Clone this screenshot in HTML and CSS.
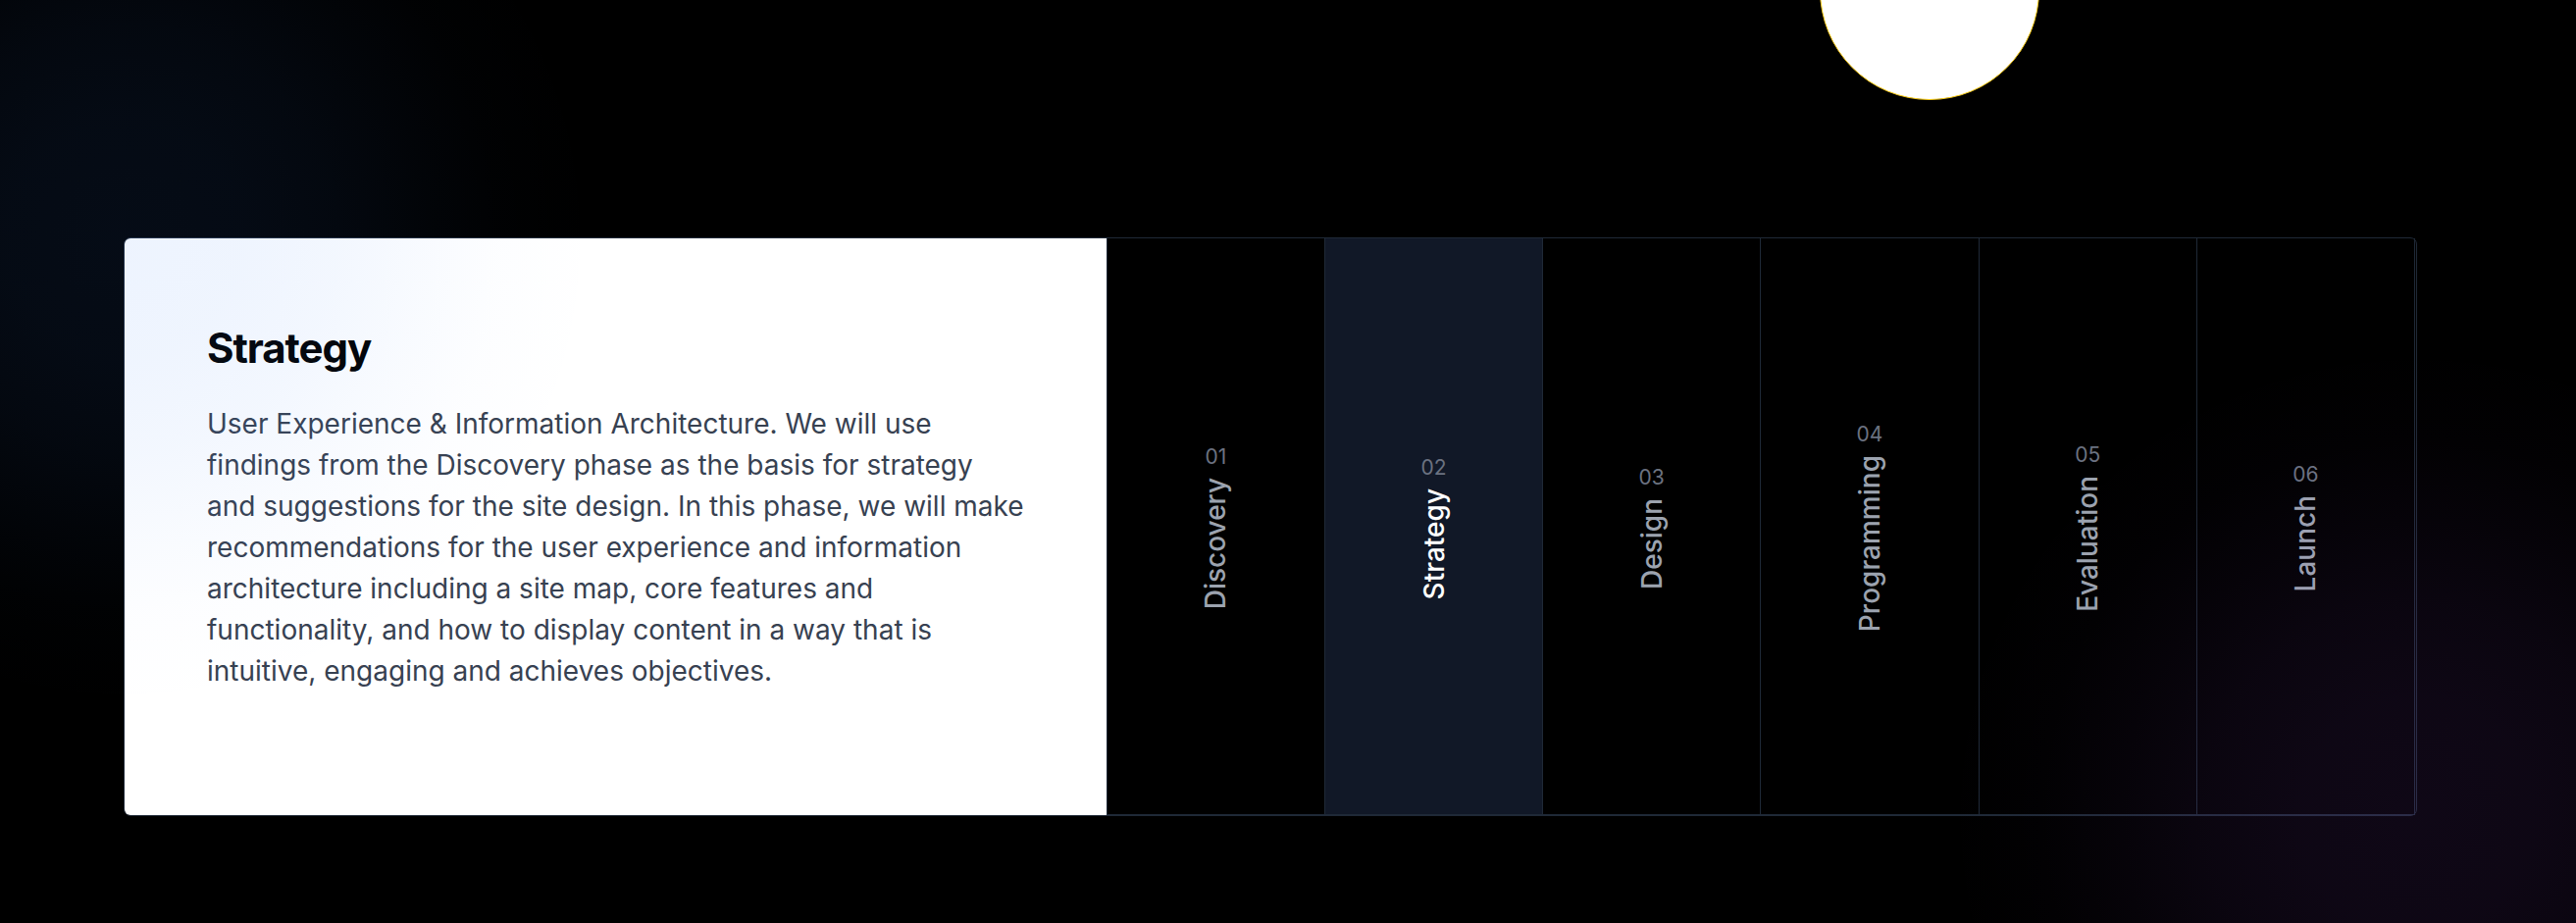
FILE: index.html
```
<!DOCTYPE html>
<html lang="en">
<head>
<meta charset="utf-8">
<meta name="viewport" content="width=device-width, initial-scale=1">
<title>Our process</title>
<link rel="stylesheet" href="styles.css">
</head>
<body>
<main class="process">
  <div class="moon" aria-hidden="true"></div>
  <section class="card">
    <article class="panel" id="panel-strategy" role="tabpanel" aria-labelledby="tab-strategy">
      <h2 class="panel-title">Strategy</h2>
      <p class="panel-text">User Experience &amp; Information Architecture. We will use findings from the Discovery phase as the basis for strategy and suggestions for the site design. In this phase, we will make recommendations for the user experience and information architecture including a site map, core features and functionality, and how to display content in a way that is intuitive, engaging and achieves objectives.</p>
    </article>
    <div class="tabs" role="tablist" aria-label="Process phases">
      <button class="tab" type="button" role="tab" aria-selected="false"><span class="tab-number">01</span><span class="tab-label">Discovery</span></button>
      <button class="tab" type="button" role="tab" aria-selected="true" id="tab-strategy" aria-controls="panel-strategy"><span class="tab-number">02</span><span class="tab-label">Strategy</span></button>
      <button class="tab" type="button" role="tab" aria-selected="false"><span class="tab-number">03</span><span class="tab-label">Design</span></button>
      <button class="tab" type="button" role="tab" aria-selected="false"><span class="tab-number">04</span><span class="tab-label">Programming</span></button>
      <button class="tab" type="button" role="tab" aria-selected="false"><span class="tab-number">05</span><span class="tab-label">Evaluation</span></button>
      <button class="tab" type="button" role="tab" aria-selected="false"><span class="tab-number">06</span><span class="tab-label">Launch</span></button>
    </div>
    <div class="glow glow-blue" aria-hidden="true"></div>
    <div class="glow glow-purple" aria-hidden="true"></div>
  </section>
</main>
</body>
</html>
```
FILE: styles.css
```
* {
  box-sizing: border-box;
}

body {
  margin: 0;
  background: #000;
  font-family: Inter, "Liberation Sans", sans-serif;
}

.process {
  position: relative;
  min-height: 100vh;
  padding: 242px 162px 109px 126px;
  overflow: hidden;
}

/* Disc that hangs over the top edge of the section */
.moon {
  position: absolute;
  top: -122px;
  right: 547px;
  width: 224px;
  height: 224px;
  border: 1px solid #facc15;
  border-radius: 50%;
  background: #fff;
}

.card {
  position: relative;
  display: grid;
  grid-template-columns: 3fr 4fr;
  padding-right: 1px;
  border: 1px solid #1f2937;
  border-radius: 7px;
}

.panel {
  padding: 84px 84px 126px;
  border-radius: 6px 0 0 6px;
  background: #fff;
}

.panel-title {
  margin: 0 0 28px;
  color: #000;
  font-size: 42px;
  font-weight: 700;
  line-height: 56px;
  letter-spacing: -0.025em;
}

.panel-text {
  margin: 0;
  color: #374151;
  font-size: 28px;
  line-height: 42px;
}

.tabs {
  display: grid;
  grid-template-columns: repeat(6, 1fr);
  border-left: 1px solid #1f2937;
}

.tab {
  display: flex;
  flex-direction: column;
  align-items: center;
  justify-content: center;
  gap: 6px;
  padding: 0;
  border: 0;
  border-right: 1px solid #1f2937;
  border-bottom: 1px solid #1f2937;
  background: transparent;
  color: #9ca3af;
  font-family: inherit;
  cursor: pointer;
}

.tab[aria-selected="true"] {
  background: #111827;
  color: #fff;
}

.tab-number {
  color: #6b7280;
  font-size: 21px;
  line-height: 30px;
}

.tab-label {
  font-size: 28px;
  font-weight: 500;
  line-height: 42px;
  writing-mode: vertical-rl;
  transform: rotate(180deg);
}

/* Soft light centred on two opposite corners of the card */
.glow {
  position: absolute;
  width: 960px;
  height: 960px;
  pointer-events: none;
}

.glow-blue {
  top: -480px;
  left: -480px;
  background: radial-gradient(circle closest-side, rgb(59 130 246 / 0.09), rgb(59 130 246 / 0.083) 25%, rgb(59 130 246 / 0.063) 45%, rgb(59 130 246 / 0.035) 63%, rgb(59 130 246 / 0.012) 80%, transparent);
}

.glow-purple {
  right: -480px;
  bottom: -480px;
  background: radial-gradient(circle closest-side, rgb(168 85 247 / 0.09), rgb(168 85 247 / 0.083) 25%, rgb(168 85 247 / 0.063) 45%, rgb(168 85 247 / 0.035) 63%, rgb(168 85 247 / 0.012) 80%, transparent);
}
```
